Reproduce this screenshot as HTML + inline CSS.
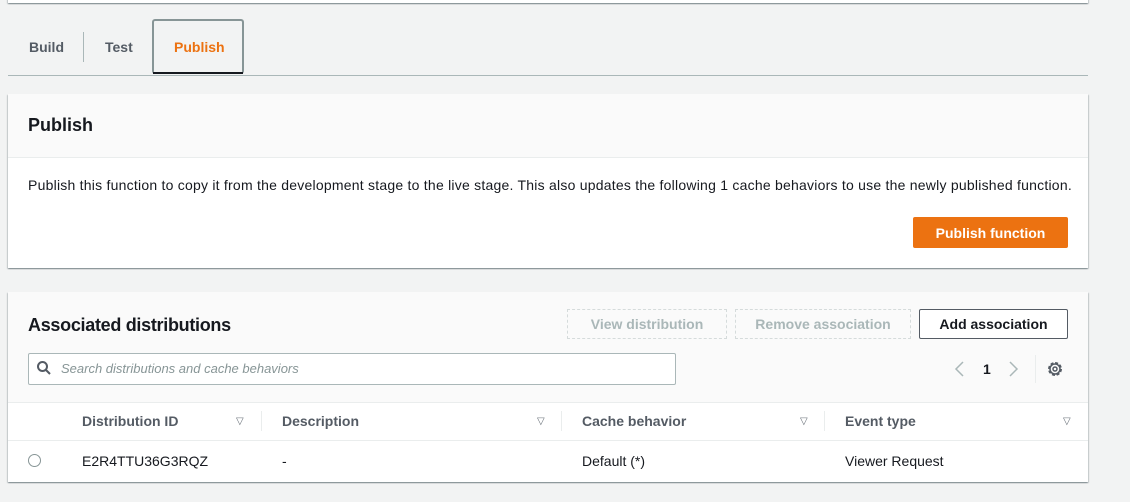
<!DOCTYPE html><html><head><style>
body{margin:0;width:1130px;height:502px;background:#f2f3f3;font-family:"Liberation Sans",sans-serif;position:relative;overflow:hidden;color:#16191f}
.a{position:absolute}
.card{background:#fff;box-shadow:0 1px 1px rgba(0,28,36,.3),1px 1px 1px rgba(0,28,36,.15),-1px 1px 1px rgba(0,28,36,.15)}
.btn{position:absolute;height:30px;box-sizing:border-box;font-size:14px;font-weight:bold;display:flex;align-items:center;justify-content:center}
.th{position:absolute;top:402px;height:38px;display:flex;align-items:center;font-size:14px;font-weight:bold;color:#545b64}
.td{position:absolute;top:441px;height:40px;display:flex;align-items:center;font-size:14px;color:#16191f}
.tri{position:absolute;top:416px;font-size:10px;color:#687078}
.sep{position:absolute;top:411px;width:1px;height:20px;background:#eaeded}
</style></head><body>
<div class="a card" style="left:8px;top:-10px;width:1080px;height:13px"></div>
<div class="a" style="left:8px;top:75px;width:1080px;height:1px;background:#aab7b8"></div>
<div class="a" style="left:29px;top:39px;font-size:14px;font-weight:bold;color:#545b64">Build</div>
<div class="a" style="left:83px;top:32px;width:1px;height:30px;background:#aab7b8"></div>
<div class="a" style="left:105px;top:39px;font-size:14px;font-weight:bold;color:#545b64">Test</div>
<div class="a" style="left:152px;top:19px;width:88px;height:53px;border:2px solid #879596;border-radius:3px;border-bottom:none"></div>
<div class="a" style="left:153px;top:72px;width:90px;height:2px;background:#16191f"></div>
<div class="a" style="left:174px;top:39px;font-size:14px;font-weight:bold;color:#ec7211">Publish</div>

<div class="a card" style="left:8px;top:94px;width:1080px;height:174px"></div>
<div class="a" style="left:8px;top:94px;width:1080px;height:63px;background:#fafafa;border-bottom:1px solid #eaeded"></div>
<div class="a" style="left:28px;top:115px;font-size:18px;font-weight:bold">Publish</div>
<div class="a" style="left:28px;top:177px;font-size:14px;letter-spacing:0.23px;white-space:nowrap">Publish this function to copy it from the development stage to the live stage. This also updates the following 1 cache behaviors to use the newly published function.</div>
<div class="btn" style="left:913px;top:217px;width:155px;height:31px;background:#ec7211;color:#fff;border-radius:2px">Publish function</div>

<div class="a card" style="left:8px;top:292px;width:1080px;height:190px"></div>
<div class="a" style="left:8px;top:292px;width:1080px;height:110px;background:#fafafa;border-bottom:1px solid #eaeded"></div>
<div class="a" style="left:28px;top:315px;font-size:18px;font-weight:bold;letter-spacing:-0.3px">Associated distributions</div>
<div class="btn" style="left:567px;top:309px;width:160px;border:1px dashed #d5dbdb;color:#aab7b8">View distribution</div>
<div class="btn" style="left:735px;top:309px;width:176px;border:1px dashed #d5dbdb;color:#aab7b8">Remove association</div>
<div class="btn" style="left:919px;top:309px;width:149px;border:1px solid #545b64;color:#16191f;background:#fff;border-radius:2px">Add association</div>
<div class="a" style="left:28px;top:353px;width:646px;height:30px;border:1px solid #aab7b8;border-radius:2px;background:#fff"></div>
<svg class="a" style="left:37px;top:361px" width="14" height="14" viewBox="0 0 14 14"><circle cx="5.5" cy="5.5" r="4.5" fill="none" stroke="#545b64" stroke-width="2"/><line x1="9" y1="9" x2="13" y2="13" stroke="#545b64" stroke-width="2"/></svg>
<div class="a" style="left:61px;top:361px;font-size:13px;font-style:italic;color:#879596">Search distributions and cache behaviors</div>
<svg class="a" style="left:953px;top:361px" width="12" height="16"><polyline points="10,1 3,8 10,15" fill="none" stroke="#aab7b8" stroke-width="1.5"/></svg>
<div class="a" style="left:983px;top:361px;font-size:14px;font-weight:bold">1</div>
<svg class="a" style="left:1008px;top:361px" width="12" height="16"><polyline points="2,1 9,8 2,15" fill="none" stroke="#aab7b8" stroke-width="1.5"/></svg>
<div class="a" style="left:1035px;top:355px;width:1px;height:28px;background:#eaeded"></div>
<svg class="a" style="left:1046px;top:360px" width="18" height="18" viewBox="0 0 18 18"><circle cx="9" cy="9" r="6" fill="none" stroke="#545b64" stroke-width="2" stroke-dasharray="3 1.7"/><circle cx="9" cy="9" r="5" fill="none" stroke="#545b64" stroke-width="1.5"/><circle cx="9" cy="9" r="2" fill="none" stroke="#545b64" stroke-width="1.5"/></svg>

<div class="th" style="left:82px">Distribution ID</div><div class="tri" style="left:236px">▽</div><div class="sep" style="left:261px"></div>
<div class="th" style="left:282px">Description</div><div class="tri" style="left:537px">▽</div><div class="sep" style="left:561px"></div>
<div class="th" style="left:582px">Cache behavior</div><div class="tri" style="left:800px">▽</div><div class="sep" style="left:824px"></div>
<div class="th" style="left:845px">Event type</div><div class="tri" style="left:1063px">▽</div>
<div class="a" style="left:8px;top:440px;width:1080px;height:1px;background:#eaeded"></div>
<div class="a" style="left:28px;top:454px;width:11px;height:11px;border:1px solid #879596;border-radius:50%"></div>
<div class="td" style="left:82px">E2R4TTU36G3RQZ</div>
<div class="td" style="left:282px">-</div>
<div class="td" style="left:582px">Default (*)</div>
<div class="td" style="left:845px">Viewer Request</div>
</body></html>
